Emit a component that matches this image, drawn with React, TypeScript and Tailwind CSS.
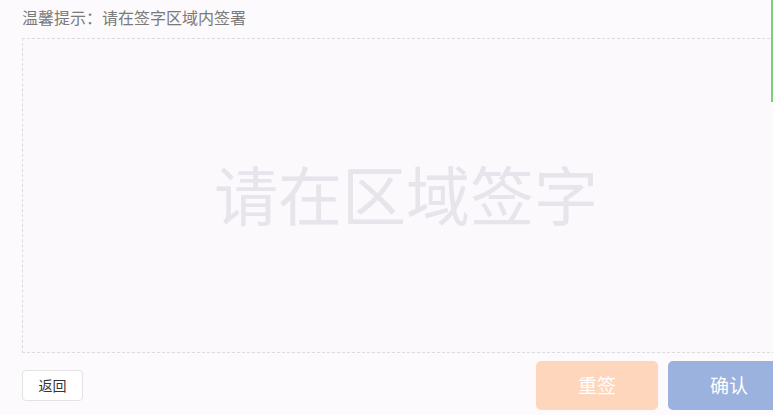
import React from "react";

export default function App() {
  return (
    <div
      className="relative w-[773px] h-[415px] overflow-hidden bg-[#fcfafc]"
      style={{ fontFamily: '"Noto Sans CJK SC", "Noto Sans", sans-serif' }}
    >
      <div className="absolute right-0 top-0 w-[2px] h-[102px] bg-[#7ccf7a]" />
      <div className="flex flex-col pl-[22px] w-[790px]">
        <div className="h-[38px] flex items-center text-[16px] leading-none text-[#7a7a7a] pb-[4px]">
          温馨提示：请在签字区域内签署
        </div>
        <div className="h-[315px] border border-dashed border-[#dcdcdc] bg-[#fbf9fc] flex items-center justify-center">
          <span className="text-[64px] leading-none text-[#e7e5eb] pb-[8px]">
            请在区域签字
          </span>
        </div>
        <div className="flex items-center justify-between mt-[8px]">
          <button className="w-[61px] h-[31px] rounded-[4px] border border-[#e3e3e3] bg-white text-[14px] text-[#333] flex items-center justify-center mt-[0px]">
            返回
          </button>
          <div className="flex gap-[10px]">
            <button className="w-[122px] h-[49px] rounded-[5px] bg-[#fdd6bc] text-white text-[19px] flex items-center justify-center">
              重签
            </button>
            <button className="w-[122px] h-[49px] rounded-[5px] bg-[#9cb2de] text-white text-[19px] flex items-center justify-center">
              确认
            </button>
          </div>
        </div>
      </div>
    </div>
  );
}
